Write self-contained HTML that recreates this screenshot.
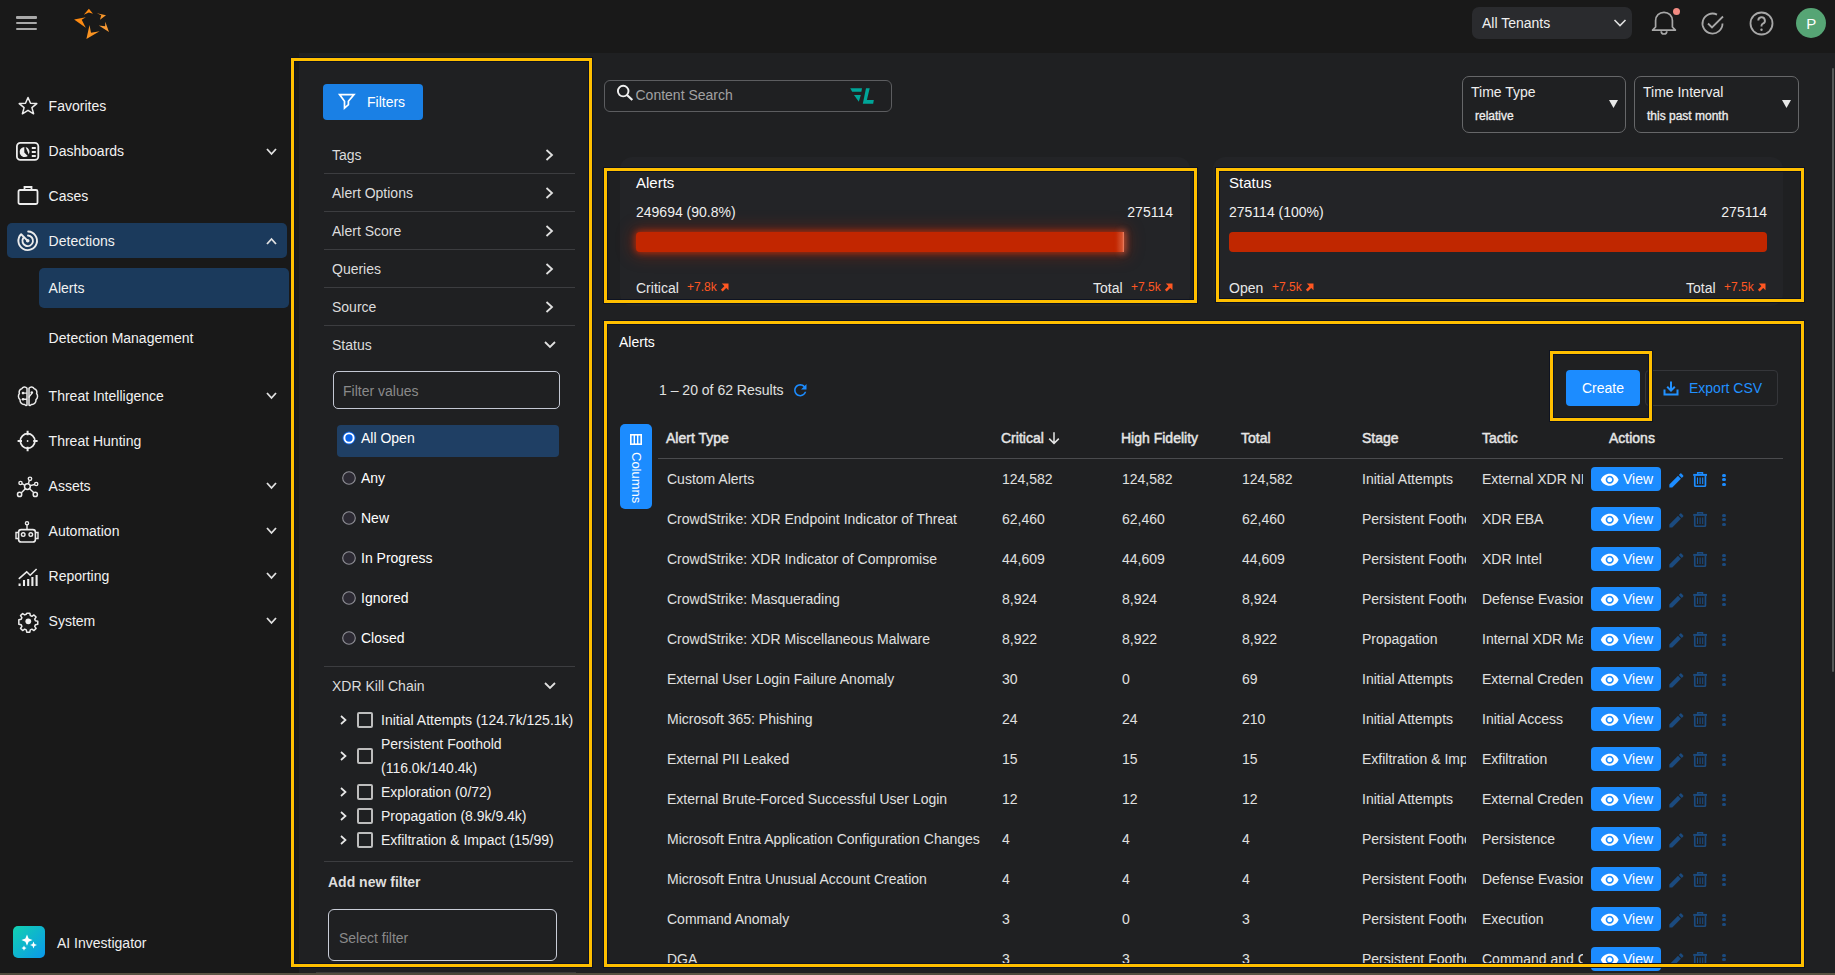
<!DOCTYPE html><html><head><meta charset="utf-8"><style>
html,body{margin:0;padding:0;width:1835px;height:975px;overflow:hidden;background:#1f2022;font-family:"Liberation Sans",sans-serif;color:#e6e6e6}
.t{position:absolute;white-space:nowrap}
.b{position:absolute;box-sizing:border-box}
svg.b{overflow:visible}
</style></head><body>
<div class="b" style="left:0px;top:0px;width:1835px;height:53px;background:#191919"></div>
<div class="b" style="left:0px;top:0px;width:299px;height:975px;background:#191919"></div>
<div class="b" style="left:16px;top:16.4px;width:21px;height:2.2px;background:#a9a9a9;border-radius:1px"></div>
<div class="b" style="left:16px;top:22px;width:21px;height:2.2px;background:#a9a9a9;border-radius:1px"></div>
<div class="b" style="left:16px;top:28.1px;width:21px;height:2.2px;background:#a9a9a9;border-radius:1px"></div>
<svg class="b" style="left:0px;top:0px;" width="120" height="50" viewBox="0 0 120 50"><g>
<polygon fill="#fd8a12" points="88.9,8.7 93,13.8 88.9,12.6 83.8,14.7"/>
<polygon fill="#f8962a" points="96.9,13.2 106,15.3 100,19.8 101.2,15.3"/>
<polygon fill="#fd8a12" points="74.1,19.4 85.8,17.3 81.7,19.8 85.8,27.8"/>
<polygon fill="#f99322" points="89.5,25.1 91,32.7 99.6,31.3 86.4,38.9"/>
<polygon fill="#f89a35" points="105.3,21.8 109,32.1 98.8,25.6 105.1,26.2"/>
</g></svg>
<div class="b" style="left:1472px;top:7px;width:160px;height:32px;background:#2a2b2e;border-radius:7px"></div>
<div class="t" style="left:1482px;top:15.15px;font-size:14px;line-height:16px;color:#f0f0f0;">All Tenants</div>
<svg class="b" style="left:1613px;top:18px;" width="14" height="10" viewBox="0 0 14 10"><polyline points="1.5,2 7,7.5 12.5,2" fill="none" stroke="#e0e0e0" stroke-width="1.6"/></svg>
<svg class="b" style="left:1651.3px;top:10.5px;" width="26" height="25" viewBox="0 0 26 25"><path d="M1.6 19.2 4.6 16V9.6C4.6 4.6 8.2 1.3 13 1.3s8.4 3.3 8.4 8.3V16l3 3.2z" fill="none" stroke="#a8a8a8" stroke-width="1.7" stroke-linejoin="round"/><path d="M10.2 20.2a2.8 2.8 0 0 0 5.6 0" fill="none" stroke="#a8a8a8" stroke-width="1.7"/></svg>
<div class="b" style="left:1672.5px;top:8px;width:7px;height:7px;background:#f28b82;border-radius:50%"></div>
<svg class="b" style="left:1700px;top:11px;" width="26" height="26" viewBox="0 0 26 26"><path d="M22.5 12.5A10 10 0 1 1 17 3.6" fill="none" stroke="#a8a8a8" stroke-width="1.8"/><polyline points="8,12.5 12,16.5 23,5.5" fill="none" stroke="#a8a8a8" stroke-width="1.8"/></svg>
<svg class="b" style="left:1749px;top:11px;" width="26" height="26" viewBox="0 0 26 26"><circle cx="12.5" cy="12.5" r="11" fill="none" stroke="#a8a8a8" stroke-width="1.8"/><path d="M9.3 9.6a3.3 3.3 0 1 1 4.6 3c-1 .5-1.4 1.1-1.4 2.2v.6" fill="none" stroke="#a8a8a8" stroke-width="1.9"/><circle cx="12.5" cy="18.8" r="1.2" fill="#a8a8a8"/></svg>
<div class="b" style="left:1796px;top:8px;width:30px;height:30px;background:#56a575;border-radius:50%"></div>
<div class="t" style="left:1806.2px;top:15.30px;font-size:15px;line-height:17px;color:#ffffff;">P</div>
<div class="b" style="left:7px;top:223px;width:280px;height:35px;background:#1b3a5c;border-radius:5px"></div>
<div class="b" style="left:39px;top:268px;width:250px;height:40px;background:#1b3a5c;border-radius:5px"></div>
<svg class="b" style="left:18px;top:96px;" width="20" height="20" viewBox="0 0 20 20"><polygon points="10,1.5 12.5,7.3 18.8,7.6 13.9,11.6 15.6,17.8 10,14.3 4.4,17.8 6.1,11.6 1.2,7.6 7.5,7.3" fill="none" stroke="#ececec" stroke-width="1.5" stroke-linejoin="round"/></svg>
<div class="t" style="left:48.6px;top:98.15px;font-size:14px;line-height:16px;color:#f2f2f2;">Favorites</div>
<svg class="b" style="left:16px;top:141.6px;" width="24" height="20" viewBox="0 0 24 20"><rect x="0.9" y="0.9" width="21.4" height="17" rx="3.4" fill="none" stroke="#ececec" stroke-width="1.8"/><path d="M8.3 4.9V10.5L11.8 14A5.1 5.1 0 1 1 8.3 4.9z" fill="#ececec"/><path d="M9.6 5A5.1 5.1 0 0 1 12.8 12.6z" fill="#ececec"/><rect x="15.8" y="5" width="4" height="2" fill="#ececec"/><rect x="15.8" y="9" width="4" height="2" fill="#ececec"/><rect x="15.8" y="13" width="4" height="2" fill="#ececec"/></svg>
<div class="t" style="left:48.6px;top:143.15px;font-size:14px;line-height:16px;color:#f2f2f2;">Dashboards</div>
<svg class="b" style="left:266px;top:148px;" width="11" height="7" viewBox="0 0 11 7"><polyline points="1,1 5.5,6 10,1" fill="none" stroke="#e0e0e0" stroke-width="1.8"/></svg>
<svg class="b" style="left:17px;top:185px;" width="22" height="20" viewBox="0 0 22 20"><rect x="1.5" y="5" width="19" height="14" rx="1.5" fill="none" stroke="#ececec" stroke-width="1.8"/><path d="M7.5 5V2h7v3" fill="none" stroke="#ececec" stroke-width="1.8"/></svg>
<div class="t" style="left:48.6px;top:188.15px;font-size:14px;line-height:16px;color:#f2f2f2;">Cases</div>
<svg class="b" style="left:17px;top:230px;" width="22" height="22" viewBox="0 0 22 22"><path d="M11.19 1.51A9.3 9.3 0 1 1 4.12 4.22L10.7 10.8" fill="none" stroke="#ececec" stroke-width="1.9" stroke-linecap="round" stroke-linejoin="round"/><path d="M10.98 5.51A5.3 5.3 0 1 1 6.11 8.15" fill="none" stroke="#ececec" stroke-width="1.9" stroke-linecap="round"/><circle cx="10.7" cy="10.8" r="1.8" fill="#ececec"/></svg>
<div class="t" style="left:48.6px;top:233.15px;font-size:14px;line-height:16px;color:#f2f2f2;">Detections</div>
<svg class="b" style="left:266px;top:238px;" width="11" height="7" viewBox="0 0 11 7"><polyline points="1,6 5.5,1 10,6" fill="none" stroke="#e0e0e0" stroke-width="1.8"/></svg>
<div class="t" style="left:48.6px;top:280.15px;font-size:14px;line-height:16px;color:#f2f2f2;">Alerts</div>
<div class="t" style="left:48.6px;top:330.15px;font-size:14px;line-height:16px;color:#f2f2f2;">Detection Management</div>
<svg class="b" style="left:17px;top:385px;" width="22" height="22" viewBox="0 0 22 22"><path d="M10 3.2C8.6 1.4 5.6 1.6 4.8 3.8 2.6 4.2 1.6 6.6 2.4 8.6 .9 10.3 1.2 13.4 3 14.6 2.8 17.4 5 19.8 7.6 19.4 8.4 20.6 9.4 20.6 10 20.2V3.2zM12 3.2c1.4-1.8 4.4-1.6 5.2.6 2.2.4 3.2 2.8 2.4 4.8 1.5 1.7 1.2 4.8-.6 6 .2 2.8-2 5.2-4.6 4.8-.8 1.2-1.8 1.2-2.4.8V3.2z" fill="none" stroke="#ececec" stroke-width="1.5" stroke-linejoin="round"/><path d="M6.2 8.1H10M6.2 14.3H10M14.8 7.8c0 2.6-2.8 2.4-2.8 5" fill="none" stroke="#ececec" stroke-width="1.4"/><circle cx="6" cy="8.1" r="1.3" fill="#ececec"/><circle cx="6" cy="14.3" r="1.3" fill="#ececec"/><circle cx="14.8" cy="7.6" r="1.3" fill="#ececec"/></svg>
<div class="t" style="left:48.6px;top:388.15px;font-size:14px;line-height:16px;color:#f2f2f2;">Threat Intelligence</div>
<svg class="b" style="left:266px;top:392px;" width="11" height="7" viewBox="0 0 11 7"><polyline points="1,1 5.5,6 10,1" fill="none" stroke="#e0e0e0" stroke-width="1.8"/></svg>
<svg class="b" style="left:17px;top:430px;" width="22" height="22" viewBox="0 0 22 22"><circle cx="10.6" cy="11" r="7.3" fill="none" stroke="#ececec" stroke-width="1.7"/><path d="M10.6 .8v4.4M10.6 16.8v4.4M.6 11H5M16.2 11h4.4" stroke="#ececec" stroke-width="2"/><circle cx="10.6" cy="11" r="0.9" fill="#ececec"/></svg>
<div class="t" style="left:48.6px;top:433.15px;font-size:14px;line-height:16px;color:#f2f2f2;">Threat Hunting</div>
<svg class="b" style="left:16px;top:476px;" width="24" height="22" viewBox="0 0 24 22"><circle cx="11.4" cy="10.6" r="2.9" fill="none" stroke="#ececec" stroke-width="1.5"/><circle cx="14" cy="2.8" r="1.7" fill="none" stroke="#ececec" stroke-width="1.4"/><circle cx="4.5" cy="7" r="1.6" fill="none" stroke="#ececec" stroke-width="1.4"/><circle cx="20.2" cy="8" r="1.6" fill="none" stroke="#ececec" stroke-width="1.4"/><circle cx="3.6" cy="18.4" r="2.1" fill="none" stroke="#ececec" stroke-width="1.5"/><circle cx="19.3" cy="18.4" r="2.1" fill="none" stroke="#ececec" stroke-width="1.5"/><path d="M13.3 4.5l-1 3.3M6 7.7l2.6 1.5M18.6 8.5l-4.3 1.2M5.2 16.9l4.1-4.2M17.8 16.8l-4.1-4.1" stroke="#ececec" stroke-width="1.4"/></svg>
<div class="t" style="left:48.6px;top:478.15px;font-size:14px;line-height:16px;color:#f2f2f2;">Assets</div>
<svg class="b" style="left:266px;top:482px;" width="11" height="7" viewBox="0 0 11 7"><polyline points="1,1 5.5,6 10,1" fill="none" stroke="#e0e0e0" stroke-width="1.8"/></svg>
<svg class="b" style="left:15px;top:521px;" width="24" height="22" viewBox="0 0 24 22"><circle cx="12" cy="2.2" r="1.6" fill="none" stroke="#ececec" stroke-width="1.4"/><path d="M12 3.8v4.4" stroke="#ececec" stroke-width="1.4"/><rect x="3.6" y="8.6" width="16.8" height="12.4" rx="2.6" fill="none" stroke="#ececec" stroke-width="1.6"/><path d="M3.6 11.5H1v6h2.6M20.4 11.5H23v6h-2.6" fill="none" stroke="#ececec" stroke-width="1.4"/><circle cx="8.2" cy="13.6" r="1.8" fill="none" stroke="#ececec" stroke-width="1.4"/><circle cx="15.8" cy="13.6" r="1.8" fill="none" stroke="#ececec" stroke-width="1.4"/></svg>
<div class="t" style="left:48.6px;top:523.15px;font-size:14px;line-height:16px;color:#f2f2f2;">Automation</div>
<svg class="b" style="left:266px;top:527px;" width="11" height="7" viewBox="0 0 11 7"><polyline points="1,1 5.5,6 10,1" fill="none" stroke="#e0e0e0" stroke-width="1.8"/></svg>
<svg class="b" style="left:18px;top:568px;" width="22" height="22" viewBox="0 0 22 22"><path d="M.8 10.8 8.7 3.8l3.5 3.4L18.6 1" fill="none" stroke="#ececec" stroke-width="1.6"/><path d="M1.6 18v-2.6M6 18v-6M10.2 18v-7M14.4 18v-9M18.6 18v-11" stroke="#ececec" stroke-width="2.1"/></svg>
<div class="t" style="left:48.6px;top:568.15px;font-size:14px;line-height:16px;color:#f2f2f2;">Reporting</div>
<svg class="b" style="left:266px;top:572px;" width="11" height="7" viewBox="0 0 11 7"><polyline points="1,1 5.5,6 10,1" fill="none" stroke="#e0e0e0" stroke-width="1.8"/></svg>
<svg class="b" style="left:18.6px;top:612.3px;" width="18.6" height="18.6" viewBox="0 0 22 22"><path d="M9.2 1.5h3.6l.6 2.8 1.9.8 2.4-1.6 2.5 2.5-1.6 2.4.8 1.9 2.8.6v3.6l-2.8.6-.8 1.9 1.6 2.4-2.5 2.5-2.4-1.6-1.9.8-.6 2.8H9.2l-.6-2.8-1.9-.8-2.4 1.6-2.5-2.5 1.6-2.4-.8-1.9-2.8-.6V9.2l2.8-.6.8-1.9-1.6-2.4 2.5-2.5 2.4 1.6 1.9-.8z" fill="none" stroke="#ececec" stroke-width="1.8" stroke-linejoin="round"/><circle cx="11" cy="11" r="3.4" fill="#ececec"/></svg>
<div class="t" style="left:48.6px;top:613.15px;font-size:14px;line-height:16px;color:#f2f2f2;">System</div>
<svg class="b" style="left:266px;top:617px;" width="11" height="7" viewBox="0 0 11 7"><polyline points="1,1 5.5,6 10,1" fill="none" stroke="#e0e0e0" stroke-width="1.8"/></svg>
<div class="b" style="left:13px;top:926px;width:32px;height:32px;background:linear-gradient(135deg,#12d1b0,#0a98ec);border-radius:5px"></div>
<svg class="b" style="left:13px;top:926px;" width="32" height="32" viewBox="0 0 32 32"><path d="M14 8.5l1.6 4 4 1.6-4 1.6-1.6 4-1.6-4-4-1.6 4-1.6z" fill="#fff"/><path d="M20.5 15.5l1 2.5 2.5 1-2.5 1-1 2.5-1-2.5-2.5-1 2.5-1z" fill="#fff"/><path d="M11 19.5l.8 1.8 1.8.8-1.8.8-.8 1.8-.8-1.8-1.8-.8 1.8-.8z" fill="#fff"/></svg>
<div class="t" style="left:57px;top:935.15px;font-size:14px;line-height:16px;color:#f0f0f0;">AI Investigator</div>
<div class="b" style="left:299px;top:53px;width:1536px;height:922px;background:#1f2022;border-radius:10px 0 0 0"></div>
<div class="b" style="left:323px;top:84px;width:100px;height:36px;background:#1a80e5;border-radius:4px"></div>
<svg class="b" style="left:338px;top:93px;" width="18" height="18" viewBox="0 0 18 18"><path d="M1.6 1.6h14.4L10.4 8.3v3.4l-3.9 3.4V8.3z" fill="none" stroke="#fff" stroke-width="1.7" stroke-linejoin="miter"/></svg>
<div class="t" style="left:367px;top:94.15px;font-size:14px;line-height:16px;color:#ffffff;">Filters</div>
<div class="t" style="left:332px;top:147.15px;font-size:14px;line-height:16px;color:#dcdcdc;">Tags</div>
<svg class="b" style="left:545px;top:149px;" width="9" height="12" viewBox="0 0 9 12"><polyline points="1.5,1 7,6 1.5,11" fill="none" stroke="#e0e0e0" stroke-width="1.8"/></svg>
<div class="b" style="left:324px;top:173px;width:251px;height:1px;background:#3c3d40"></div>
<div class="t" style="left:332px;top:185.15px;font-size:14px;line-height:16px;color:#dcdcdc;">Alert Options</div>
<svg class="b" style="left:545px;top:187px;" width="9" height="12" viewBox="0 0 9 12"><polyline points="1.5,1 7,6 1.5,11" fill="none" stroke="#e0e0e0" stroke-width="1.8"/></svg>
<div class="b" style="left:324px;top:211px;width:251px;height:1px;background:#3c3d40"></div>
<div class="t" style="left:332px;top:223.15px;font-size:14px;line-height:16px;color:#dcdcdc;">Alert Score</div>
<svg class="b" style="left:545px;top:225px;" width="9" height="12" viewBox="0 0 9 12"><polyline points="1.5,1 7,6 1.5,11" fill="none" stroke="#e0e0e0" stroke-width="1.8"/></svg>
<div class="b" style="left:324px;top:249px;width:251px;height:1px;background:#3c3d40"></div>
<div class="t" style="left:332px;top:261.15px;font-size:14px;line-height:16px;color:#dcdcdc;">Queries</div>
<svg class="b" style="left:545px;top:263px;" width="9" height="12" viewBox="0 0 9 12"><polyline points="1.5,1 7,6 1.5,11" fill="none" stroke="#e0e0e0" stroke-width="1.8"/></svg>
<div class="b" style="left:324px;top:287px;width:251px;height:1px;background:#3c3d40"></div>
<div class="t" style="left:332px;top:299.15px;font-size:14px;line-height:16px;color:#dcdcdc;">Source</div>
<svg class="b" style="left:545px;top:301px;" width="9" height="12" viewBox="0 0 9 12"><polyline points="1.5,1 7,6 1.5,11" fill="none" stroke="#e0e0e0" stroke-width="1.8"/></svg>
<div class="b" style="left:324px;top:325px;width:251px;height:1px;background:#3c3d40"></div>
<div class="t" style="left:332px;top:337.15px;font-size:14px;line-height:16px;color:#dcdcdc;">Status</div>
<svg class="b" style="left:544px;top:341px;" width="12" height="7" viewBox="0 0 12 7"><polyline points="1,1 6.0,6 11,1" fill="none" stroke="#e0e0e0" stroke-width="1.8"/></svg>
<div class="b" style="left:333px;top:371px;width:227px;height:38px;border:1px solid #c4c8d4;border-radius:5px"></div>
<div class="t" style="left:343px;top:383.15px;font-size:14px;line-height:16px;color:#8a8a8a;">Filter values</div>
<div class="b" style="left:337px;top:425px;width:222px;height:32px;background:#1f3f64;border-radius:4px"></div>
<svg class="b" style="left:342px;top:431px;" width="14" height="14" viewBox="0 0 14 14"><circle cx="7" cy="7" r="6.5" fill="#0b63e5"/><circle cx="7" cy="7" r="4.6" fill="#0b63e5" stroke="#fff" stroke-width="1.9"/></svg>
<div class="t" style="left:361px;top:430.15px;font-size:14px;line-height:16px;color:#ffffff;">All Open</div>
<svg class="b" style="left:342px;top:471px;" width="14" height="14" viewBox="0 0 14 14"><circle cx="7" cy="7" r="6.3" fill="#2c2a33" stroke="#8f8f96" stroke-width="1.1"/></svg>
<div class="t" style="left:361px;top:470.15px;font-size:14px;line-height:16px;color:#ffffff;">Any</div>
<svg class="b" style="left:342px;top:511px;" width="14" height="14" viewBox="0 0 14 14"><circle cx="7" cy="7" r="6.3" fill="#2c2a33" stroke="#8f8f96" stroke-width="1.1"/></svg>
<div class="t" style="left:361px;top:510.15px;font-size:14px;line-height:16px;color:#ffffff;">New</div>
<svg class="b" style="left:342px;top:551px;" width="14" height="14" viewBox="0 0 14 14"><circle cx="7" cy="7" r="6.3" fill="#2c2a33" stroke="#8f8f96" stroke-width="1.1"/></svg>
<div class="t" style="left:361px;top:550.15px;font-size:14px;line-height:16px;color:#ffffff;">In Progress</div>
<svg class="b" style="left:342px;top:591px;" width="14" height="14" viewBox="0 0 14 14"><circle cx="7" cy="7" r="6.3" fill="#2c2a33" stroke="#8f8f96" stroke-width="1.1"/></svg>
<div class="t" style="left:361px;top:590.15px;font-size:14px;line-height:16px;color:#ffffff;">Ignored</div>
<svg class="b" style="left:342px;top:631px;" width="14" height="14" viewBox="0 0 14 14"><circle cx="7" cy="7" r="6.3" fill="#2c2a33" stroke="#8f8f96" stroke-width="1.1"/></svg>
<div class="t" style="left:361px;top:630.15px;font-size:14px;line-height:16px;color:#ffffff;">Closed</div>
<div class="b" style="left:324px;top:666px;width:251px;height:1px;background:#3c3d40"></div>
<div class="t" style="left:332px;top:678.15px;font-size:14px;line-height:16px;color:#dcdcdc;">XDR Kill Chain</div>
<svg class="b" style="left:544px;top:682px;" width="12" height="7" viewBox="0 0 12 7"><polyline points="1,1 6.0,6 11,1" fill="none" stroke="#e0e0e0" stroke-width="1.8"/></svg>
<div class="t" style="left:381px;top:712.15px;font-size:14px;line-height:16px;color:#f0f0f0;">Initial Attempts (124.7k/125.1k)</div>
<svg class="b" style="left:340px;top:715px;" width="7" height="10" viewBox="0 0 7 10"><polyline points="1,1 5.5,5 1,9" fill="none" stroke="#e8e8e8" stroke-width="1.7"/></svg>
<div class="b" style="left:357px;top:712px;width:16px;height:16px;border:2px solid #bdbdbd;border-radius:2px"></div>
<div class="t" style="left:381px;top:736.15px;font-size:14px;line-height:16px;color:#f0f0f0;">Persistent Foothold</div>
<svg class="b" style="left:340px;top:751px;" width="7" height="10" viewBox="0 0 7 10"><polyline points="1,1 5.5,5 1,9" fill="none" stroke="#e8e8e8" stroke-width="1.7"/></svg>
<div class="b" style="left:357px;top:748px;width:16px;height:16px;border:2px solid #bdbdbd;border-radius:2px"></div>
<div class="t" style="left:381px;top:760.15px;font-size:14px;line-height:16px;color:#f0f0f0;">(116.0k/140.4k)</div>
<div class="t" style="left:381px;top:784.15px;font-size:14px;line-height:16px;color:#f0f0f0;">Exploration (0/72)</div>
<svg class="b" style="left:340px;top:787px;" width="7" height="10" viewBox="0 0 7 10"><polyline points="1,1 5.5,5 1,9" fill="none" stroke="#e8e8e8" stroke-width="1.7"/></svg>
<div class="b" style="left:357px;top:784px;width:16px;height:16px;border:2px solid #bdbdbd;border-radius:2px"></div>
<div class="t" style="left:381px;top:808.15px;font-size:14px;line-height:16px;color:#f0f0f0;">Propagation (8.9k/9.4k)</div>
<svg class="b" style="left:340px;top:811px;" width="7" height="10" viewBox="0 0 7 10"><polyline points="1,1 5.5,5 1,9" fill="none" stroke="#e8e8e8" stroke-width="1.7"/></svg>
<div class="b" style="left:357px;top:808px;width:16px;height:16px;border:2px solid #bdbdbd;border-radius:2px"></div>
<div class="t" style="left:381px;top:832.15px;font-size:14px;line-height:16px;color:#f0f0f0;">Exfiltration &amp; Impact (15/99)</div>
<svg class="b" style="left:340px;top:835px;" width="7" height="10" viewBox="0 0 7 10"><polyline points="1,1 5.5,5 1,9" fill="none" stroke="#e8e8e8" stroke-width="1.7"/></svg>
<div class="b" style="left:357px;top:832px;width:16px;height:16px;border:2px solid #bdbdbd;border-radius:2px"></div>
<div class="b" style="left:324px;top:861px;width:249px;height:1px;background:#3c3d40"></div>
<div class="t" style="left:328px;top:874.15px;font-size:14px;line-height:16px;color:#dedede;font-weight:700;">Add new filter</div>
<div class="b" style="left:328px;top:909px;width:229px;height:52px;border:1px solid #c9cdd8;border-radius:6px"></div>
<div class="t" style="left:339px;top:930.15px;font-size:14px;line-height:16px;color:#8a8a8a;">Select filter</div>
<div class="b" style="left:316px;top:972px;width:260px;height:1px;background:#3a3a3a"></div>
<div class="b" style="left:604px;top:80px;width:288px;height:32px;border:1px solid #5c5d60;border-radius:6px"></div>
<svg class="b" style="left:616px;top:85px;" width="18" height="18" viewBox="0 0 18 18"><circle cx="7.2" cy="6.1" r="5.3" fill="none" stroke="#f0f0f0" stroke-width="1.9"/><line x1="11" y1="10" x2="16.3" y2="15" stroke="#f0f0f0" stroke-width="2.2"/></svg>
<div class="t" style="left:635.5px;top:87.15px;font-size:14px;line-height:16px;color:#a2a2a2;">Content Search</div>
<svg class="b" style="left:850px;top:88px;" width="25" height="17" viewBox="0 0 25 17"><polygon points="0.2,0.15 12,0.15 11.4,3.85 2.2,3.85" fill="#00a598"/><polygon points="4,7.1 10.9,7.1 8.8,13.7" fill="#00a598"/><polygon points="16,0.2 19.7,0.2 16.9,11.9 23.8,11.9 23.2,15.7 12.8,15.7" fill="#00a598"/></svg>
<div class="b" style="left:1462px;top:76px;width:164px;height:57px;border:1px solid #666769;border-radius:7px"></div>
<div class="t" style="left:1471px;top:84.15px;font-size:14px;line-height:16px;color:#eeeeee;">Time Type</div>
<div class="t" style="left:1475px;top:108.54px;font-size:12px;line-height:14px;color:#eeeeee;-webkit-text-stroke:0.3px #eeeeee;">relative</div>
<svg class="b" style="left:1609px;top:100px;" width="9" height="8" viewBox="0 0 9 8"><polygon points="0,0 9,0 4.5,8" fill="#e8e8e8"/></svg>
<div class="b" style="left:1634px;top:76px;width:165px;height:57px;border:1px solid #666769;border-radius:7px"></div>
<div class="t" style="left:1643px;top:84.15px;font-size:14px;line-height:16px;color:#eeeeee;">Time Interval</div>
<div class="t" style="left:1647px;top:108.54px;font-size:12px;line-height:14px;color:#eeeeee;-webkit-text-stroke:0.3px #eeeeee;">this past month</div>
<svg class="b" style="left:1782px;top:100px;" width="9" height="8" viewBox="0 0 9 8"><polygon points="0,0 9,0 4.5,8" fill="#e8e8e8"/></svg>
<div class="b" style="left:1832px;top:68px;width:2px;height:604px;background:#555857;border-radius:1px"></div>
<div class="b" style="left:620px;top:157px;width:570px;height:149px;background:#232427;border-radius:12px"></div>
<div class="b" style="left:1213px;top:157px;width:570px;height:149px;background:#232427;border-radius:12px"></div>
<div class="t" style="left:636px;top:174.30px;font-size:15px;line-height:17px;color:#ffffff;">Alerts</div>
<div class="t" style="left:636px;top:204.15px;font-size:14px;line-height:16px;color:#f0f0f0;">249694 (90.8%)</div>
<div class="t" style="right:662px;top:204.15px;font-size:14px;line-height:16px;color:#f0f0f0;">275114</div>
<div class="b" style="left:636px;top:232px;width:488px;height:20px;background:#c22600;border-radius:4px 0 0 4px;box-shadow:0 0 6px 1px rgba(210,45,5,0.75),0 0 16px 4px rgba(190,40,10,0.35)"></div>
<div class="b" style="left:1116px;top:232px;width:8px;height:20px;background:linear-gradient(90deg,rgba(230,110,70,0),rgba(230,110,70,0.35) 75%,rgba(240,140,110,0.8) 88%,rgba(240,140,110,0.8))"></div>
<div class="b" style="left:1122px;top:232px;width:2px;height:20px;box-shadow:0 0 6px 2px rgba(230,170,150,0.28)"></div>
<div class="t" style="left:636px;top:280.15px;font-size:14px;line-height:16px;color:#e8e8e8;">Critical</div>
<div class="t" style="left:687px;top:279.84px;font-size:12px;line-height:14px;color:#ff5722;">+7.8k</div>
<svg class="b" style="left:720px;top:283px;" width="9" height="9" viewBox="0 0 9 9"><path d="M1.8 7.6 7 2.4" stroke="#ff5722" stroke-width="2.6"/><path d="M1.8 0.5h6.7v6.7z" fill="#ff5722"/></svg>
<div class="t" style="left:1093px;top:280.15px;font-size:14px;line-height:16px;color:#e8e8e8;">Total</div>
<div class="t" style="left:1131px;top:279.84px;font-size:12px;line-height:14px;color:#ff5722;">+7.5k</div>
<svg class="b" style="left:1164px;top:283px;" width="9" height="9" viewBox="0 0 9 9"><path d="M1.8 7.6 7 2.4" stroke="#ff5722" stroke-width="2.6"/><path d="M1.8 0.5h6.7v6.7z" fill="#ff5722"/></svg>
<div class="t" style="left:1229px;top:174.30px;font-size:15px;line-height:17px;color:#ffffff;">Status</div>
<div class="t" style="left:1229px;top:204.15px;font-size:14px;line-height:16px;color:#f0f0f0;">275114 (100%)</div>
<div class="t" style="right:68px;top:204.15px;font-size:14px;line-height:16px;color:#f0f0f0;">275114</div>
<div class="b" style="left:1229px;top:232px;width:538px;height:20px;background:#c02700;border-radius:4px"></div>
<div class="t" style="left:1229px;top:280.15px;font-size:14px;line-height:16px;color:#e8e8e8;">Open</div>
<div class="t" style="left:1272px;top:279.84px;font-size:12px;line-height:14px;color:#ff5722;">+7.5k</div>
<svg class="b" style="left:1305px;top:283px;" width="9" height="9" viewBox="0 0 9 9"><path d="M1.8 7.6 7 2.4" stroke="#ff5722" stroke-width="2.6"/><path d="M1.8 0.5h6.7v6.7z" fill="#ff5722"/></svg>
<div class="t" style="left:1686px;top:280.15px;font-size:14px;line-height:16px;color:#e8e8e8;">Total</div>
<div class="t" style="left:1724px;top:279.84px;font-size:12px;line-height:14px;color:#ff5722;">+7.5k</div>
<svg class="b" style="left:1757px;top:283px;" width="9" height="9" viewBox="0 0 9 9"><path d="M1.8 7.6 7 2.4" stroke="#ff5722" stroke-width="2.6"/><path d="M1.8 0.5h6.7v6.7z" fill="#ff5722"/></svg>
<div class="t" style="left:619px;top:334.15px;font-size:14px;line-height:16px;color:#ffffff;">Alerts</div>
<div class="t" style="left:659px;top:382.15px;font-size:14px;line-height:16px;color:#e0e0e0;">1 – 20 of 62 Results</div>
<svg class="b" style="left:791px;top:380.6px;" width="18.6" height="18.6" viewBox="0 0 24 24"><path d="M17.65 6.35C16.2 4.9 14.21 4 12 4c-4.42 0-7.99 3.58-7.99 8s3.57 8 7.99 8c3.73 0 6.84-2.55 7.73-6h-2.08c-.82 2.33-3.04 4-5.65 4-3.31 0-6-2.690-6-6s2.69-6 6-6c1.66 0 3.14.69 4.22 1.78L13 11h7V4l-2.35 2.35z" fill="#1c8cff"/></svg>
<div class="b" style="left:1566px;top:370px;width:74px;height:36px;background:#1c8cff;border-radius:4px"></div>
<div class="t" style="left:1582px;top:380.15px;font-size:14px;line-height:16px;color:#ffffff;">Create</div>
<div class="b" style="left:1645px;top:370px;width:133px;height:36px;border:1px solid #35363a;border-radius:4px"></div>
<svg class="b" style="left:1663px;top:380px;" width="16" height="16" viewBox="0 0 16 16"><path d="M8 1.5v9M4.2 6.8 8 10.6l3.8-3.8" fill="none" stroke="#2291ff" stroke-width="2"/><path d="M1.5 9.5v5h13v-5" fill="none" stroke="#2291ff" stroke-width="2"/></svg>
<div class="t" style="left:1689px;top:380.15px;font-size:14px;line-height:16px;color:#2291ff;">Export CSV</div>
<div class="b" style="left:620px;top:424px;width:32px;height:85px;background:#1c8cff;border-radius:5px"></div>
<svg class="b" style="left:630px;top:434px;" width="12" height="11" viewBox="0 0 12 11"><rect x="0.8" y="0.8" width="10.4" height="9.4" fill="none" stroke="#fff" stroke-width="1.6"/><path d="M4.3 1v9M7.7 1v9" stroke="#fff" stroke-width="1.4"/></svg>
<div class="t" style="left:629px;top:452px;width:14px;height:51px;font-size:13px;line-height:14px;color:#fff;writing-mode:vertical-rl">Columns</div>
<div class="t" style="left:666px;top:429.75px;font-size:14px;line-height:16px;color:#e6e6e6;-webkit-text-stroke:0.45px #e6e6e6;">Alert Type</div>
<div class="t" style="left:1001px;top:429.75px;font-size:14px;line-height:16px;color:#e6e6e6;-webkit-text-stroke:0.45px #e6e6e6;">Critical</div>
<div class="t" style="left:1121px;top:429.75px;font-size:14px;line-height:16px;color:#e6e6e6;-webkit-text-stroke:0.45px #e6e6e6;">High Fidelity</div>
<div class="t" style="left:1241px;top:429.75px;font-size:14px;line-height:16px;color:#e6e6e6;-webkit-text-stroke:0.45px #e6e6e6;">Total</div>
<div class="t" style="left:1362px;top:429.75px;font-size:14px;line-height:16px;color:#e6e6e6;-webkit-text-stroke:0.45px #e6e6e6;">Stage</div>
<div class="t" style="left:1482px;top:429.75px;font-size:14px;line-height:16px;color:#e6e6e6;-webkit-text-stroke:0.45px #e6e6e6;">Tactic</div>
<div class="t" style="left:1609px;top:429.75px;font-size:14px;line-height:16px;color:#e6e6e6;-webkit-text-stroke:0.45px #e6e6e6;">Actions</div>
<svg class="b" style="left:1047px;top:430px;" width="14" height="15" viewBox="0 0 14 15"><path d="M7 2.2v11.2M2.2 8.6 7 13.4l4.8-4.8" fill="none" stroke="#e6e6e6" stroke-width="1.5"/></svg>
<div class="b" style="left:658px;top:458px;width:1125px;height:1px;background:#4a4b4e"></div>
<div class="t" style="left:667px;top:471.15px;font-size:14px;line-height:16px;color:#e0e0e0;">Custom Alerts</div>
<div class="t" style="left:1002px;top:471.15px;font-size:14px;line-height:16px;color:#e0e0e0;">124,582</div>
<div class="t" style="left:1122px;top:471.15px;font-size:14px;line-height:16px;color:#e0e0e0;">124,582</div>
<div class="t" style="left:1242px;top:471.15px;font-size:14px;line-height:16px;color:#e0e0e0;">124,582</div>
<div class="t" style="left:1362px;top:471.00px;width:104px;overflow:hidden;font-size:14px;line-height:16px;color:#e0e0e0">Initial Attempts</div>
<div class="t" style="left:1482px;top:471.00px;width:101px;overflow:hidden;font-size:14px;line-height:16px;color:#e0e0e0">External XDR NI</div>
<div class="b" style="left:1591px;top:467px;width:70px;height:24px;background:#1c8cff;border-radius:4px"></div>
<svg class="b" style="left:1599.5px;top:470.05px;" width="19.4" height="19.4" viewBox="0 0 24 24"><path d="M12 4.5C7 4.5 2.73 7.61 1 12c1.73 4.39 6 7.5 11 7.5s9.270-3.11 11-7.5c-1.73-4.39-6-7.5-11-7.5zM12 17c-2.76 0-5-2.24-5-5s2.24-5 5-5 5 2.24 5 5-2.24 5-5 5zm0-8c-1.66 0-3 1.34-3 3s1.34 3 3 3 3-1.34 3-3-1.34-3-3-3z" fill="#fff"/></svg>
<div class="t" style="left:1623px;top:471.15px;font-size:14px;line-height:16px;color:#ffffff;">View</div>
<svg class="b" style="left:1667px;top:470.8px;" width="18.8" height="18.8" viewBox="0 0 24 24"><path d="M3 17.25V21h3.75L17.81 9.94l-3.75-3.75L3 17.25zM20.71 7.04a1 1 0 0 0 0-1.41l-2.34-2.34a1 1 0 0 0-1.41 0l-1.83 1.83 3.75 3.75 1.83-1.83z" fill="#1c8cff"/></svg>
<svg class="b" style="left:1693px;top:472px;" width="14.2" height="15.5" viewBox="0 0 14.2 15.5"><rect x="0.2" y="1.9" width="13.8" height="2" fill="#1c8cff"/><path d="M4.7 2.2V0.8h4.8v1.4" fill="none" stroke="#1c8cff" stroke-width="1.5"/><path d="M1.75 4v9.4q0 .85.85.85h9q.85 0 .85-.85V4" fill="none" stroke="#1c8cff" stroke-width="1.7"/><path d="M4.5 5.4v6.6M7.1 5.4v6.6M9.7 5.4v6.6" stroke="#1c8cff" stroke-width="1.1"/></svg>
<div class="b" style="left:1722.3px;top:473.8px;width:3.4px;height:3.4px;background:#1c8cff;border-radius:50%"></div>
<div class="b" style="left:1722.3px;top:478.1px;width:3.4px;height:3.4px;background:#1c8cff;border-radius:50%"></div>
<div class="b" style="left:1722.3px;top:482.6px;width:3.4px;height:3.4px;background:#1c8cff;border-radius:50%"></div>
<div class="t" style="left:667px;top:511.15px;font-size:14px;line-height:16px;color:#e0e0e0;">CrowdStrike: XDR Endpoint Indicator of Threat</div>
<div class="t" style="left:1002px;top:511.15px;font-size:14px;line-height:16px;color:#e0e0e0;">62,460</div>
<div class="t" style="left:1122px;top:511.15px;font-size:14px;line-height:16px;color:#e0e0e0;">62,460</div>
<div class="t" style="left:1242px;top:511.15px;font-size:14px;line-height:16px;color:#e0e0e0;">62,460</div>
<div class="t" style="left:1362px;top:511.00px;width:104px;overflow:hidden;font-size:14px;line-height:16px;color:#e0e0e0">Persistent Foothold</div>
<div class="t" style="left:1482px;top:511.00px;width:101px;overflow:hidden;font-size:14px;line-height:16px;color:#e0e0e0">XDR EBA</div>
<div class="b" style="left:1591px;top:507px;width:70px;height:24px;background:#1c8cff;border-radius:4px"></div>
<svg class="b" style="left:1599.5px;top:510.05px;" width="19.4" height="19.4" viewBox="0 0 24 24"><path d="M12 4.5C7 4.5 2.73 7.61 1 12c1.73 4.39 6 7.5 11 7.5s9.270-3.11 11-7.5c-1.73-4.39-6-7.5-11-7.5zM12 17c-2.76 0-5-2.24-5-5s2.24-5 5-5 5 2.24 5 5-2.24 5-5 5zm0-8c-1.66 0-3 1.34-3 3s1.34 3 3 3 3-1.34 3-3-1.34-3-3-3z" fill="#fff"/></svg>
<div class="t" style="left:1623px;top:511.15px;font-size:14px;line-height:16px;color:#ffffff;">View</div>
<svg class="b" style="left:1667px;top:510.8px;" width="18.8" height="18.8" viewBox="0 0 24 24"><path d="M3 17.25V21h3.75L17.81 9.94l-3.75-3.75L3 17.25zM20.71 7.04a1 1 0 0 0 0-1.41l-2.34-2.34a1 1 0 0 0-1.41 0l-1.83 1.83 3.75 3.75 1.83-1.83z" fill="#1b4a7e"/></svg>
<svg class="b" style="left:1693px;top:512px;" width="14.2" height="15.5" viewBox="0 0 14.2 15.5"><rect x="0.2" y="1.9" width="13.8" height="2" fill="#1b4a7e"/><path d="M4.7 2.2V0.8h4.8v1.4" fill="none" stroke="#1b4a7e" stroke-width="1.5"/><path d="M1.75 4v9.4q0 .85.85.85h9q.85 0 .85-.85V4" fill="none" stroke="#1b4a7e" stroke-width="1.7"/><path d="M4.5 5.4v6.6M7.1 5.4v6.6M9.7 5.4v6.6" stroke="#1b4a7e" stroke-width="1.1"/></svg>
<div class="b" style="left:1722.3px;top:513.8px;width:3.4px;height:3.4px;background:#1b4a7e;border-radius:50%"></div>
<div class="b" style="left:1722.3px;top:518.0999999999999px;width:3.4px;height:3.4px;background:#1b4a7e;border-radius:50%"></div>
<div class="b" style="left:1722.3px;top:522.5999999999999px;width:3.4px;height:3.4px;background:#1b4a7e;border-radius:50%"></div>
<div class="t" style="left:667px;top:551.15px;font-size:14px;line-height:16px;color:#e0e0e0;">CrowdStrike: XDR Indicator of Compromise</div>
<div class="t" style="left:1002px;top:551.15px;font-size:14px;line-height:16px;color:#e0e0e0;">44,609</div>
<div class="t" style="left:1122px;top:551.15px;font-size:14px;line-height:16px;color:#e0e0e0;">44,609</div>
<div class="t" style="left:1242px;top:551.15px;font-size:14px;line-height:16px;color:#e0e0e0;">44,609</div>
<div class="t" style="left:1362px;top:551.00px;width:104px;overflow:hidden;font-size:14px;line-height:16px;color:#e0e0e0">Persistent Foothold</div>
<div class="t" style="left:1482px;top:551.00px;width:101px;overflow:hidden;font-size:14px;line-height:16px;color:#e0e0e0">XDR Intel</div>
<div class="b" style="left:1591px;top:547px;width:70px;height:24px;background:#1c8cff;border-radius:4px"></div>
<svg class="b" style="left:1599.5px;top:550.05px;" width="19.4" height="19.4" viewBox="0 0 24 24"><path d="M12 4.5C7 4.5 2.73 7.61 1 12c1.73 4.39 6 7.5 11 7.5s9.270-3.11 11-7.5c-1.73-4.39-6-7.5-11-7.5zM12 17c-2.76 0-5-2.24-5-5s2.24-5 5-5 5 2.24 5 5-2.24 5-5 5zm0-8c-1.66 0-3 1.34-3 3s1.34 3 3 3 3-1.34 3-3-1.34-3-3-3z" fill="#fff"/></svg>
<div class="t" style="left:1623px;top:551.15px;font-size:14px;line-height:16px;color:#ffffff;">View</div>
<svg class="b" style="left:1667px;top:550.8px;" width="18.8" height="18.8" viewBox="0 0 24 24"><path d="M3 17.25V21h3.75L17.81 9.94l-3.75-3.75L3 17.25zM20.71 7.04a1 1 0 0 0 0-1.41l-2.34-2.34a1 1 0 0 0-1.41 0l-1.83 1.83 3.75 3.75 1.83-1.83z" fill="#1b4a7e"/></svg>
<svg class="b" style="left:1693px;top:552px;" width="14.2" height="15.5" viewBox="0 0 14.2 15.5"><rect x="0.2" y="1.9" width="13.8" height="2" fill="#1b4a7e"/><path d="M4.7 2.2V0.8h4.8v1.4" fill="none" stroke="#1b4a7e" stroke-width="1.5"/><path d="M1.75 4v9.4q0 .85.85.85h9q.85 0 .85-.85V4" fill="none" stroke="#1b4a7e" stroke-width="1.7"/><path d="M4.5 5.4v6.6M7.1 5.4v6.6M9.7 5.4v6.6" stroke="#1b4a7e" stroke-width="1.1"/></svg>
<div class="b" style="left:1722.3px;top:553.8px;width:3.4px;height:3.4px;background:#1b4a7e;border-radius:50%"></div>
<div class="b" style="left:1722.3px;top:558.0999999999999px;width:3.4px;height:3.4px;background:#1b4a7e;border-radius:50%"></div>
<div class="b" style="left:1722.3px;top:562.5999999999999px;width:3.4px;height:3.4px;background:#1b4a7e;border-radius:50%"></div>
<div class="t" style="left:667px;top:591.15px;font-size:14px;line-height:16px;color:#e0e0e0;">CrowdStrike: Masquerading</div>
<div class="t" style="left:1002px;top:591.15px;font-size:14px;line-height:16px;color:#e0e0e0;">8,924</div>
<div class="t" style="left:1122px;top:591.15px;font-size:14px;line-height:16px;color:#e0e0e0;">8,924</div>
<div class="t" style="left:1242px;top:591.15px;font-size:14px;line-height:16px;color:#e0e0e0;">8,924</div>
<div class="t" style="left:1362px;top:591.00px;width:104px;overflow:hidden;font-size:14px;line-height:16px;color:#e0e0e0">Persistent Foothold</div>
<div class="t" style="left:1482px;top:591.00px;width:101px;overflow:hidden;font-size:14px;line-height:16px;color:#e0e0e0">Defense Evasion</div>
<div class="b" style="left:1591px;top:587px;width:70px;height:24px;background:#1c8cff;border-radius:4px"></div>
<svg class="b" style="left:1599.5px;top:590.05px;" width="19.4" height="19.4" viewBox="0 0 24 24"><path d="M12 4.5C7 4.5 2.73 7.61 1 12c1.73 4.39 6 7.5 11 7.5s9.270-3.11 11-7.5c-1.73-4.39-6-7.5-11-7.5zM12 17c-2.76 0-5-2.24-5-5s2.24-5 5-5 5 2.24 5 5-2.24 5-5 5zm0-8c-1.66 0-3 1.34-3 3s1.34 3 3 3 3-1.34 3-3-1.34-3-3-3z" fill="#fff"/></svg>
<div class="t" style="left:1623px;top:591.15px;font-size:14px;line-height:16px;color:#ffffff;">View</div>
<svg class="b" style="left:1667px;top:590.8px;" width="18.8" height="18.8" viewBox="0 0 24 24"><path d="M3 17.25V21h3.75L17.81 9.94l-3.75-3.75L3 17.25zM20.71 7.04a1 1 0 0 0 0-1.41l-2.34-2.34a1 1 0 0 0-1.41 0l-1.83 1.83 3.75 3.75 1.83-1.83z" fill="#1b4a7e"/></svg>
<svg class="b" style="left:1693px;top:592px;" width="14.2" height="15.5" viewBox="0 0 14.2 15.5"><rect x="0.2" y="1.9" width="13.8" height="2" fill="#1b4a7e"/><path d="M4.7 2.2V0.8h4.8v1.4" fill="none" stroke="#1b4a7e" stroke-width="1.5"/><path d="M1.75 4v9.4q0 .85.85.85h9q.85 0 .85-.85V4" fill="none" stroke="#1b4a7e" stroke-width="1.7"/><path d="M4.5 5.4v6.6M7.1 5.4v6.6M9.7 5.4v6.6" stroke="#1b4a7e" stroke-width="1.1"/></svg>
<div class="b" style="left:1722.3px;top:593.8px;width:3.4px;height:3.4px;background:#1b4a7e;border-radius:50%"></div>
<div class="b" style="left:1722.3px;top:598.0999999999999px;width:3.4px;height:3.4px;background:#1b4a7e;border-radius:50%"></div>
<div class="b" style="left:1722.3px;top:602.5999999999999px;width:3.4px;height:3.4px;background:#1b4a7e;border-radius:50%"></div>
<div class="t" style="left:667px;top:631.15px;font-size:14px;line-height:16px;color:#e0e0e0;">CrowdStrike: XDR Miscellaneous Malware</div>
<div class="t" style="left:1002px;top:631.15px;font-size:14px;line-height:16px;color:#e0e0e0;">8,922</div>
<div class="t" style="left:1122px;top:631.15px;font-size:14px;line-height:16px;color:#e0e0e0;">8,922</div>
<div class="t" style="left:1242px;top:631.15px;font-size:14px;line-height:16px;color:#e0e0e0;">8,922</div>
<div class="t" style="left:1362px;top:631.00px;width:104px;overflow:hidden;font-size:14px;line-height:16px;color:#e0e0e0">Propagation</div>
<div class="t" style="left:1482px;top:631.00px;width:101px;overflow:hidden;font-size:14px;line-height:16px;color:#e0e0e0">Internal XDR Malware</div>
<div class="b" style="left:1591px;top:627px;width:70px;height:24px;background:#1c8cff;border-radius:4px"></div>
<svg class="b" style="left:1599.5px;top:630.05px;" width="19.4" height="19.4" viewBox="0 0 24 24"><path d="M12 4.5C7 4.5 2.73 7.61 1 12c1.73 4.39 6 7.5 11 7.5s9.270-3.11 11-7.5c-1.73-4.39-6-7.5-11-7.5zM12 17c-2.76 0-5-2.24-5-5s2.24-5 5-5 5 2.24 5 5-2.24 5-5 5zm0-8c-1.66 0-3 1.34-3 3s1.34 3 3 3 3-1.34 3-3-1.34-3-3-3z" fill="#fff"/></svg>
<div class="t" style="left:1623px;top:631.15px;font-size:14px;line-height:16px;color:#ffffff;">View</div>
<svg class="b" style="left:1667px;top:630.8px;" width="18.8" height="18.8" viewBox="0 0 24 24"><path d="M3 17.25V21h3.75L17.81 9.94l-3.75-3.75L3 17.25zM20.71 7.04a1 1 0 0 0 0-1.41l-2.34-2.34a1 1 0 0 0-1.41 0l-1.83 1.83 3.75 3.75 1.83-1.83z" fill="#1b4a7e"/></svg>
<svg class="b" style="left:1693px;top:632px;" width="14.2" height="15.5" viewBox="0 0 14.2 15.5"><rect x="0.2" y="1.9" width="13.8" height="2" fill="#1b4a7e"/><path d="M4.7 2.2V0.8h4.8v1.4" fill="none" stroke="#1b4a7e" stroke-width="1.5"/><path d="M1.75 4v9.4q0 .85.85.85h9q.85 0 .85-.85V4" fill="none" stroke="#1b4a7e" stroke-width="1.7"/><path d="M4.5 5.4v6.6M7.1 5.4v6.6M9.7 5.4v6.6" stroke="#1b4a7e" stroke-width="1.1"/></svg>
<div class="b" style="left:1722.3px;top:633.8px;width:3.4px;height:3.4px;background:#1b4a7e;border-radius:50%"></div>
<div class="b" style="left:1722.3px;top:638.0999999999999px;width:3.4px;height:3.4px;background:#1b4a7e;border-radius:50%"></div>
<div class="b" style="left:1722.3px;top:642.5999999999999px;width:3.4px;height:3.4px;background:#1b4a7e;border-radius:50%"></div>
<div class="t" style="left:667px;top:671.15px;font-size:14px;line-height:16px;color:#e0e0e0;">External User Login Failure Anomaly</div>
<div class="t" style="left:1002px;top:671.15px;font-size:14px;line-height:16px;color:#e0e0e0;">30</div>
<div class="t" style="left:1122px;top:671.15px;font-size:14px;line-height:16px;color:#e0e0e0;">0</div>
<div class="t" style="left:1242px;top:671.15px;font-size:14px;line-height:16px;color:#e0e0e0;">69</div>
<div class="t" style="left:1362px;top:671.00px;width:104px;overflow:hidden;font-size:14px;line-height:16px;color:#e0e0e0">Initial Attempts</div>
<div class="t" style="left:1482px;top:671.00px;width:101px;overflow:hidden;font-size:14px;line-height:16px;color:#e0e0e0">External Credential</div>
<div class="b" style="left:1591px;top:667px;width:70px;height:24px;background:#1c8cff;border-radius:4px"></div>
<svg class="b" style="left:1599.5px;top:670.05px;" width="19.4" height="19.4" viewBox="0 0 24 24"><path d="M12 4.5C7 4.5 2.73 7.61 1 12c1.73 4.39 6 7.5 11 7.5s9.270-3.11 11-7.5c-1.73-4.39-6-7.5-11-7.5zM12 17c-2.76 0-5-2.24-5-5s2.24-5 5-5 5 2.24 5 5-2.24 5-5 5zm0-8c-1.66 0-3 1.34-3 3s1.34 3 3 3 3-1.34 3-3-1.34-3-3-3z" fill="#fff"/></svg>
<div class="t" style="left:1623px;top:671.15px;font-size:14px;line-height:16px;color:#ffffff;">View</div>
<svg class="b" style="left:1667px;top:670.8px;" width="18.8" height="18.8" viewBox="0 0 24 24"><path d="M3 17.25V21h3.75L17.81 9.94l-3.75-3.75L3 17.25zM20.71 7.04a1 1 0 0 0 0-1.41l-2.34-2.34a1 1 0 0 0-1.41 0l-1.83 1.83 3.75 3.75 1.83-1.83z" fill="#1b4a7e"/></svg>
<svg class="b" style="left:1693px;top:672px;" width="14.2" height="15.5" viewBox="0 0 14.2 15.5"><rect x="0.2" y="1.9" width="13.8" height="2" fill="#1b4a7e"/><path d="M4.7 2.2V0.8h4.8v1.4" fill="none" stroke="#1b4a7e" stroke-width="1.5"/><path d="M1.75 4v9.4q0 .85.85.85h9q.85 0 .85-.85V4" fill="none" stroke="#1b4a7e" stroke-width="1.7"/><path d="M4.5 5.4v6.6M7.1 5.4v6.6M9.7 5.4v6.6" stroke="#1b4a7e" stroke-width="1.1"/></svg>
<div class="b" style="left:1722.3px;top:673.8px;width:3.4px;height:3.4px;background:#1b4a7e;border-radius:50%"></div>
<div class="b" style="left:1722.3px;top:678.0999999999999px;width:3.4px;height:3.4px;background:#1b4a7e;border-radius:50%"></div>
<div class="b" style="left:1722.3px;top:682.5999999999999px;width:3.4px;height:3.4px;background:#1b4a7e;border-radius:50%"></div>
<div class="t" style="left:667px;top:711.15px;font-size:14px;line-height:16px;color:#e0e0e0;">Microsoft 365: Phishing</div>
<div class="t" style="left:1002px;top:711.15px;font-size:14px;line-height:16px;color:#e0e0e0;">24</div>
<div class="t" style="left:1122px;top:711.15px;font-size:14px;line-height:16px;color:#e0e0e0;">24</div>
<div class="t" style="left:1242px;top:711.15px;font-size:14px;line-height:16px;color:#e0e0e0;">210</div>
<div class="t" style="left:1362px;top:711.00px;width:104px;overflow:hidden;font-size:14px;line-height:16px;color:#e0e0e0">Initial Attempts</div>
<div class="t" style="left:1482px;top:711.00px;width:101px;overflow:hidden;font-size:14px;line-height:16px;color:#e0e0e0">Initial Access</div>
<div class="b" style="left:1591px;top:707px;width:70px;height:24px;background:#1c8cff;border-radius:4px"></div>
<svg class="b" style="left:1599.5px;top:710.05px;" width="19.4" height="19.4" viewBox="0 0 24 24"><path d="M12 4.5C7 4.5 2.73 7.61 1 12c1.73 4.39 6 7.5 11 7.5s9.270-3.11 11-7.5c-1.73-4.39-6-7.5-11-7.5zM12 17c-2.76 0-5-2.24-5-5s2.24-5 5-5 5 2.24 5 5-2.24 5-5 5zm0-8c-1.66 0-3 1.34-3 3s1.34 3 3 3 3-1.34 3-3-1.34-3-3-3z" fill="#fff"/></svg>
<div class="t" style="left:1623px;top:711.15px;font-size:14px;line-height:16px;color:#ffffff;">View</div>
<svg class="b" style="left:1667px;top:710.8px;" width="18.8" height="18.8" viewBox="0 0 24 24"><path d="M3 17.25V21h3.75L17.81 9.94l-3.75-3.75L3 17.25zM20.71 7.04a1 1 0 0 0 0-1.41l-2.34-2.34a1 1 0 0 0-1.41 0l-1.83 1.83 3.75 3.75 1.83-1.83z" fill="#1b4a7e"/></svg>
<svg class="b" style="left:1693px;top:712px;" width="14.2" height="15.5" viewBox="0 0 14.2 15.5"><rect x="0.2" y="1.9" width="13.8" height="2" fill="#1b4a7e"/><path d="M4.7 2.2V0.8h4.8v1.4" fill="none" stroke="#1b4a7e" stroke-width="1.5"/><path d="M1.75 4v9.4q0 .85.85.85h9q.85 0 .85-.85V4" fill="none" stroke="#1b4a7e" stroke-width="1.7"/><path d="M4.5 5.4v6.6M7.1 5.4v6.6M9.7 5.4v6.6" stroke="#1b4a7e" stroke-width="1.1"/></svg>
<div class="b" style="left:1722.3px;top:713.8px;width:3.4px;height:3.4px;background:#1b4a7e;border-radius:50%"></div>
<div class="b" style="left:1722.3px;top:718.0999999999999px;width:3.4px;height:3.4px;background:#1b4a7e;border-radius:50%"></div>
<div class="b" style="left:1722.3px;top:722.5999999999999px;width:3.4px;height:3.4px;background:#1b4a7e;border-radius:50%"></div>
<div class="t" style="left:667px;top:751.15px;font-size:14px;line-height:16px;color:#e0e0e0;">External PII Leaked</div>
<div class="t" style="left:1002px;top:751.15px;font-size:14px;line-height:16px;color:#e0e0e0;">15</div>
<div class="t" style="left:1122px;top:751.15px;font-size:14px;line-height:16px;color:#e0e0e0;">15</div>
<div class="t" style="left:1242px;top:751.15px;font-size:14px;line-height:16px;color:#e0e0e0;">15</div>
<div class="t" style="left:1362px;top:751.00px;width:104px;overflow:hidden;font-size:14px;line-height:16px;color:#e0e0e0">Exfiltration &amp; Impact</div>
<div class="t" style="left:1482px;top:751.00px;width:101px;overflow:hidden;font-size:14px;line-height:16px;color:#e0e0e0">Exfiltration</div>
<div class="b" style="left:1591px;top:747px;width:70px;height:24px;background:#1c8cff;border-radius:4px"></div>
<svg class="b" style="left:1599.5px;top:750.05px;" width="19.4" height="19.4" viewBox="0 0 24 24"><path d="M12 4.5C7 4.5 2.73 7.61 1 12c1.73 4.39 6 7.5 11 7.5s9.270-3.11 11-7.5c-1.73-4.39-6-7.5-11-7.5zM12 17c-2.76 0-5-2.24-5-5s2.24-5 5-5 5 2.24 5 5-2.24 5-5 5zm0-8c-1.66 0-3 1.34-3 3s1.34 3 3 3 3-1.34 3-3-1.34-3-3-3z" fill="#fff"/></svg>
<div class="t" style="left:1623px;top:751.15px;font-size:14px;line-height:16px;color:#ffffff;">View</div>
<svg class="b" style="left:1667px;top:750.8px;" width="18.8" height="18.8" viewBox="0 0 24 24"><path d="M3 17.25V21h3.75L17.81 9.94l-3.75-3.75L3 17.25zM20.71 7.04a1 1 0 0 0 0-1.41l-2.34-2.34a1 1 0 0 0-1.41 0l-1.83 1.83 3.75 3.75 1.83-1.83z" fill="#1b4a7e"/></svg>
<svg class="b" style="left:1693px;top:752px;" width="14.2" height="15.5" viewBox="0 0 14.2 15.5"><rect x="0.2" y="1.9" width="13.8" height="2" fill="#1b4a7e"/><path d="M4.7 2.2V0.8h4.8v1.4" fill="none" stroke="#1b4a7e" stroke-width="1.5"/><path d="M1.75 4v9.4q0 .85.85.85h9q.85 0 .85-.85V4" fill="none" stroke="#1b4a7e" stroke-width="1.7"/><path d="M4.5 5.4v6.6M7.1 5.4v6.6M9.7 5.4v6.6" stroke="#1b4a7e" stroke-width="1.1"/></svg>
<div class="b" style="left:1722.3px;top:753.8px;width:3.4px;height:3.4px;background:#1b4a7e;border-radius:50%"></div>
<div class="b" style="left:1722.3px;top:758.0999999999999px;width:3.4px;height:3.4px;background:#1b4a7e;border-radius:50%"></div>
<div class="b" style="left:1722.3px;top:762.5999999999999px;width:3.4px;height:3.4px;background:#1b4a7e;border-radius:50%"></div>
<div class="t" style="left:667px;top:791.15px;font-size:14px;line-height:16px;color:#e0e0e0;">External Brute-Forced Successful User Login</div>
<div class="t" style="left:1002px;top:791.15px;font-size:14px;line-height:16px;color:#e0e0e0;">12</div>
<div class="t" style="left:1122px;top:791.15px;font-size:14px;line-height:16px;color:#e0e0e0;">12</div>
<div class="t" style="left:1242px;top:791.15px;font-size:14px;line-height:16px;color:#e0e0e0;">12</div>
<div class="t" style="left:1362px;top:791.00px;width:104px;overflow:hidden;font-size:14px;line-height:16px;color:#e0e0e0">Initial Attempts</div>
<div class="t" style="left:1482px;top:791.00px;width:101px;overflow:hidden;font-size:14px;line-height:16px;color:#e0e0e0">External Credential</div>
<div class="b" style="left:1591px;top:787px;width:70px;height:24px;background:#1c8cff;border-radius:4px"></div>
<svg class="b" style="left:1599.5px;top:790.05px;" width="19.4" height="19.4" viewBox="0 0 24 24"><path d="M12 4.5C7 4.5 2.73 7.61 1 12c1.73 4.39 6 7.5 11 7.5s9.270-3.11 11-7.5c-1.73-4.39-6-7.5-11-7.5zM12 17c-2.76 0-5-2.24-5-5s2.24-5 5-5 5 2.24 5 5-2.24 5-5 5zm0-8c-1.66 0-3 1.34-3 3s1.34 3 3 3 3-1.34 3-3-1.34-3-3-3z" fill="#fff"/></svg>
<div class="t" style="left:1623px;top:791.15px;font-size:14px;line-height:16px;color:#ffffff;">View</div>
<svg class="b" style="left:1667px;top:790.8px;" width="18.8" height="18.8" viewBox="0 0 24 24"><path d="M3 17.25V21h3.75L17.81 9.94l-3.75-3.75L3 17.25zM20.71 7.04a1 1 0 0 0 0-1.41l-2.34-2.34a1 1 0 0 0-1.41 0l-1.83 1.83 3.75 3.75 1.83-1.83z" fill="#1b4a7e"/></svg>
<svg class="b" style="left:1693px;top:792px;" width="14.2" height="15.5" viewBox="0 0 14.2 15.5"><rect x="0.2" y="1.9" width="13.8" height="2" fill="#1b4a7e"/><path d="M4.7 2.2V0.8h4.8v1.4" fill="none" stroke="#1b4a7e" stroke-width="1.5"/><path d="M1.75 4v9.4q0 .85.85.85h9q.85 0 .85-.85V4" fill="none" stroke="#1b4a7e" stroke-width="1.7"/><path d="M4.5 5.4v6.6M7.1 5.4v6.6M9.7 5.4v6.6" stroke="#1b4a7e" stroke-width="1.1"/></svg>
<div class="b" style="left:1722.3px;top:793.8px;width:3.4px;height:3.4px;background:#1b4a7e;border-radius:50%"></div>
<div class="b" style="left:1722.3px;top:798.0999999999999px;width:3.4px;height:3.4px;background:#1b4a7e;border-radius:50%"></div>
<div class="b" style="left:1722.3px;top:802.5999999999999px;width:3.4px;height:3.4px;background:#1b4a7e;border-radius:50%"></div>
<div class="t" style="left:667px;top:831.15px;font-size:14px;line-height:16px;color:#e0e0e0;">Microsoft Entra Application Configuration Changes</div>
<div class="t" style="left:1002px;top:831.15px;font-size:14px;line-height:16px;color:#e0e0e0;">4</div>
<div class="t" style="left:1122px;top:831.15px;font-size:14px;line-height:16px;color:#e0e0e0;">4</div>
<div class="t" style="left:1242px;top:831.15px;font-size:14px;line-height:16px;color:#e0e0e0;">4</div>
<div class="t" style="left:1362px;top:831.00px;width:104px;overflow:hidden;font-size:14px;line-height:16px;color:#e0e0e0">Persistent Foothold</div>
<div class="t" style="left:1482px;top:831.00px;width:101px;overflow:hidden;font-size:14px;line-height:16px;color:#e0e0e0">Persistence</div>
<div class="b" style="left:1591px;top:827px;width:70px;height:24px;background:#1c8cff;border-radius:4px"></div>
<svg class="b" style="left:1599.5px;top:830.05px;" width="19.4" height="19.4" viewBox="0 0 24 24"><path d="M12 4.5C7 4.5 2.73 7.61 1 12c1.73 4.39 6 7.5 11 7.5s9.270-3.11 11-7.5c-1.73-4.39-6-7.5-11-7.5zM12 17c-2.76 0-5-2.24-5-5s2.24-5 5-5 5 2.24 5 5-2.24 5-5 5zm0-8c-1.66 0-3 1.34-3 3s1.34 3 3 3 3-1.34 3-3-1.34-3-3-3z" fill="#fff"/></svg>
<div class="t" style="left:1623px;top:831.15px;font-size:14px;line-height:16px;color:#ffffff;">View</div>
<svg class="b" style="left:1667px;top:830.8px;" width="18.8" height="18.8" viewBox="0 0 24 24"><path d="M3 17.25V21h3.75L17.81 9.94l-3.75-3.75L3 17.25zM20.71 7.04a1 1 0 0 0 0-1.41l-2.34-2.34a1 1 0 0 0-1.41 0l-1.83 1.83 3.75 3.75 1.83-1.83z" fill="#1b4a7e"/></svg>
<svg class="b" style="left:1693px;top:832px;" width="14.2" height="15.5" viewBox="0 0 14.2 15.5"><rect x="0.2" y="1.9" width="13.8" height="2" fill="#1b4a7e"/><path d="M4.7 2.2V0.8h4.8v1.4" fill="none" stroke="#1b4a7e" stroke-width="1.5"/><path d="M1.75 4v9.4q0 .85.85.85h9q.85 0 .85-.85V4" fill="none" stroke="#1b4a7e" stroke-width="1.7"/><path d="M4.5 5.4v6.6M7.1 5.4v6.6M9.7 5.4v6.6" stroke="#1b4a7e" stroke-width="1.1"/></svg>
<div class="b" style="left:1722.3px;top:833.8px;width:3.4px;height:3.4px;background:#1b4a7e;border-radius:50%"></div>
<div class="b" style="left:1722.3px;top:838.0999999999999px;width:3.4px;height:3.4px;background:#1b4a7e;border-radius:50%"></div>
<div class="b" style="left:1722.3px;top:842.5999999999999px;width:3.4px;height:3.4px;background:#1b4a7e;border-radius:50%"></div>
<div class="t" style="left:667px;top:871.15px;font-size:14px;line-height:16px;color:#e0e0e0;">Microsoft Entra Unusual Account Creation</div>
<div class="t" style="left:1002px;top:871.15px;font-size:14px;line-height:16px;color:#e0e0e0;">4</div>
<div class="t" style="left:1122px;top:871.15px;font-size:14px;line-height:16px;color:#e0e0e0;">4</div>
<div class="t" style="left:1242px;top:871.15px;font-size:14px;line-height:16px;color:#e0e0e0;">4</div>
<div class="t" style="left:1362px;top:871.00px;width:104px;overflow:hidden;font-size:14px;line-height:16px;color:#e0e0e0">Persistent Foothold</div>
<div class="t" style="left:1482px;top:871.00px;width:101px;overflow:hidden;font-size:14px;line-height:16px;color:#e0e0e0">Defense Evasion</div>
<div class="b" style="left:1591px;top:867px;width:70px;height:24px;background:#1c8cff;border-radius:4px"></div>
<svg class="b" style="left:1599.5px;top:870.05px;" width="19.4" height="19.4" viewBox="0 0 24 24"><path d="M12 4.5C7 4.5 2.73 7.61 1 12c1.73 4.39 6 7.5 11 7.5s9.270-3.11 11-7.5c-1.73-4.39-6-7.5-11-7.5zM12 17c-2.76 0-5-2.24-5-5s2.24-5 5-5 5 2.24 5 5-2.24 5-5 5zm0-8c-1.66 0-3 1.34-3 3s1.34 3 3 3 3-1.34 3-3-1.34-3-3-3z" fill="#fff"/></svg>
<div class="t" style="left:1623px;top:871.15px;font-size:14px;line-height:16px;color:#ffffff;">View</div>
<svg class="b" style="left:1667px;top:870.8px;" width="18.8" height="18.8" viewBox="0 0 24 24"><path d="M3 17.25V21h3.75L17.81 9.94l-3.75-3.75L3 17.25zM20.71 7.04a1 1 0 0 0 0-1.41l-2.34-2.34a1 1 0 0 0-1.41 0l-1.83 1.83 3.75 3.75 1.83-1.83z" fill="#1b4a7e"/></svg>
<svg class="b" style="left:1693px;top:872px;" width="14.2" height="15.5" viewBox="0 0 14.2 15.5"><rect x="0.2" y="1.9" width="13.8" height="2" fill="#1b4a7e"/><path d="M4.7 2.2V0.8h4.8v1.4" fill="none" stroke="#1b4a7e" stroke-width="1.5"/><path d="M1.75 4v9.4q0 .85.85.85h9q.85 0 .85-.85V4" fill="none" stroke="#1b4a7e" stroke-width="1.7"/><path d="M4.5 5.4v6.6M7.1 5.4v6.6M9.7 5.4v6.6" stroke="#1b4a7e" stroke-width="1.1"/></svg>
<div class="b" style="left:1722.3px;top:873.8px;width:3.4px;height:3.4px;background:#1b4a7e;border-radius:50%"></div>
<div class="b" style="left:1722.3px;top:878.0999999999999px;width:3.4px;height:3.4px;background:#1b4a7e;border-radius:50%"></div>
<div class="b" style="left:1722.3px;top:882.5999999999999px;width:3.4px;height:3.4px;background:#1b4a7e;border-radius:50%"></div>
<div class="t" style="left:667px;top:911.15px;font-size:14px;line-height:16px;color:#e0e0e0;">Command Anomaly</div>
<div class="t" style="left:1002px;top:911.15px;font-size:14px;line-height:16px;color:#e0e0e0;">3</div>
<div class="t" style="left:1122px;top:911.15px;font-size:14px;line-height:16px;color:#e0e0e0;">0</div>
<div class="t" style="left:1242px;top:911.15px;font-size:14px;line-height:16px;color:#e0e0e0;">3</div>
<div class="t" style="left:1362px;top:911.00px;width:104px;overflow:hidden;font-size:14px;line-height:16px;color:#e0e0e0">Persistent Foothold</div>
<div class="t" style="left:1482px;top:911.00px;width:101px;overflow:hidden;font-size:14px;line-height:16px;color:#e0e0e0">Execution</div>
<div class="b" style="left:1591px;top:907px;width:70px;height:24px;background:#1c8cff;border-radius:4px"></div>
<svg class="b" style="left:1599.5px;top:910.05px;" width="19.4" height="19.4" viewBox="0 0 24 24"><path d="M12 4.5C7 4.5 2.73 7.61 1 12c1.73 4.39 6 7.5 11 7.5s9.270-3.11 11-7.5c-1.73-4.39-6-7.5-11-7.5zM12 17c-2.76 0-5-2.24-5-5s2.24-5 5-5 5 2.24 5 5-2.24 5-5 5zm0-8c-1.66 0-3 1.34-3 3s1.34 3 3 3 3-1.34 3-3-1.34-3-3-3z" fill="#fff"/></svg>
<div class="t" style="left:1623px;top:911.15px;font-size:14px;line-height:16px;color:#ffffff;">View</div>
<svg class="b" style="left:1667px;top:910.8px;" width="18.8" height="18.8" viewBox="0 0 24 24"><path d="M3 17.25V21h3.75L17.81 9.94l-3.75-3.75L3 17.25zM20.71 7.04a1 1 0 0 0 0-1.41l-2.34-2.34a1 1 0 0 0-1.41 0l-1.83 1.83 3.75 3.75 1.83-1.83z" fill="#1b4a7e"/></svg>
<svg class="b" style="left:1693px;top:912px;" width="14.2" height="15.5" viewBox="0 0 14.2 15.5"><rect x="0.2" y="1.9" width="13.8" height="2" fill="#1b4a7e"/><path d="M4.7 2.2V0.8h4.8v1.4" fill="none" stroke="#1b4a7e" stroke-width="1.5"/><path d="M1.75 4v9.4q0 .85.85.85h9q.85 0 .85-.85V4" fill="none" stroke="#1b4a7e" stroke-width="1.7"/><path d="M4.5 5.4v6.6M7.1 5.4v6.6M9.7 5.4v6.6" stroke="#1b4a7e" stroke-width="1.1"/></svg>
<div class="b" style="left:1722.3px;top:913.8px;width:3.4px;height:3.4px;background:#1b4a7e;border-radius:50%"></div>
<div class="b" style="left:1722.3px;top:918.0999999999999px;width:3.4px;height:3.4px;background:#1b4a7e;border-radius:50%"></div>
<div class="b" style="left:1722.3px;top:922.5999999999999px;width:3.4px;height:3.4px;background:#1b4a7e;border-radius:50%"></div>
<div class="t" style="left:667px;top:951.15px;font-size:14px;line-height:16px;color:#e0e0e0;">DGA</div>
<div class="t" style="left:1002px;top:951.15px;font-size:14px;line-height:16px;color:#e0e0e0;">3</div>
<div class="t" style="left:1122px;top:951.15px;font-size:14px;line-height:16px;color:#e0e0e0;">3</div>
<div class="t" style="left:1242px;top:951.15px;font-size:14px;line-height:16px;color:#e0e0e0;">3</div>
<div class="t" style="left:1362px;top:951.00px;width:104px;overflow:hidden;font-size:14px;line-height:16px;color:#e0e0e0">Persistent Foothold</div>
<div class="t" style="left:1482px;top:951.00px;width:101px;overflow:hidden;font-size:14px;line-height:16px;color:#e0e0e0">Command and Control</div>
<div class="b" style="left:1591px;top:947px;width:70px;height:24px;background:#1c8cff;border-radius:4px"></div>
<svg class="b" style="left:1599.5px;top:950.05px;" width="19.4" height="19.4" viewBox="0 0 24 24"><path d="M12 4.5C7 4.5 2.73 7.61 1 12c1.73 4.39 6 7.5 11 7.5s9.270-3.11 11-7.5c-1.73-4.39-6-7.5-11-7.5zM12 17c-2.76 0-5-2.24-5-5s2.24-5 5-5 5 2.24 5 5-2.24 5-5 5zm0-8c-1.66 0-3 1.34-3 3s1.34 3 3 3 3-1.34 3-3-1.34-3-3-3z" fill="#fff"/></svg>
<div class="t" style="left:1623px;top:951.15px;font-size:14px;line-height:16px;color:#ffffff;">View</div>
<svg class="b" style="left:1667px;top:950.8px;" width="18.8" height="18.8" viewBox="0 0 24 24"><path d="M3 17.25V21h3.75L17.81 9.94l-3.75-3.75L3 17.25zM20.71 7.04a1 1 0 0 0 0-1.41l-2.34-2.34a1 1 0 0 0-1.41 0l-1.83 1.83 3.75 3.75 1.83-1.83z" fill="#1b4a7e"/></svg>
<svg class="b" style="left:1693px;top:952px;" width="14.2" height="15.5" viewBox="0 0 14.2 15.5"><rect x="0.2" y="1.9" width="13.8" height="2" fill="#1b4a7e"/><path d="M4.7 2.2V0.8h4.8v1.4" fill="none" stroke="#1b4a7e" stroke-width="1.5"/><path d="M1.75 4v9.4q0 .85.85.85h9q.85 0 .85-.85V4" fill="none" stroke="#1b4a7e" stroke-width="1.7"/><path d="M4.5 5.4v6.6M7.1 5.4v6.6M9.7 5.4v6.6" stroke="#1b4a7e" stroke-width="1.1"/></svg>
<div class="b" style="left:1722.3px;top:953.8px;width:3.4px;height:3.4px;background:#1b4a7e;border-radius:50%"></div>
<div class="b" style="left:1722.3px;top:958.0999999999999px;width:3.4px;height:3.4px;background:#1b4a7e;border-radius:50%"></div>
<div class="b" style="left:1722.3px;top:962.5999999999999px;width:3.4px;height:3.4px;background:#1b4a7e;border-radius:50%"></div>
<div class="b" style="left:291px;top:58px;width:301px;height:909px;border:3px solid #ffbf00;box-shadow:0 0 0 1px #0e1322, inset 0 0 0 1px #0e1322"></div>
<div class="b" style="left:604px;top:168px;width:593px;height:135px;border:3px solid #ffbf00;box-shadow:0 0 0 1px #0e1322, inset 0 0 0 1px #0e1322"></div>
<div class="b" style="left:1216px;top:168px;width:588px;height:134px;border:3px solid #ffbf00;box-shadow:0 0 0 1px #0e1322, inset 0 0 0 1px #0e1322"></div>
<div class="b" style="left:604px;top:321px;width:1200px;height:646px;border:3px solid #ffbf00;box-shadow:0 0 0 1px #0e1322, inset 0 0 0 1px #0e1322"></div>
<div class="b" style="left:1550px;top:351px;width:102px;height:70px;border:3px solid #ffbf00;box-shadow:0 0 0 1px #0e1322, inset 0 0 0 1px #0e1322"></div>
<div class="b" style="left:0px;top:973px;width:1835px;height:2px;background:linear-gradient(90deg,#4f4a3c,#5e5646 12%,#4a4538 25%,#625a48 40%,#4d483b 55%,#5f5747 70%,#4b463a 85%,#5a5343)"></div>
</body></html>
